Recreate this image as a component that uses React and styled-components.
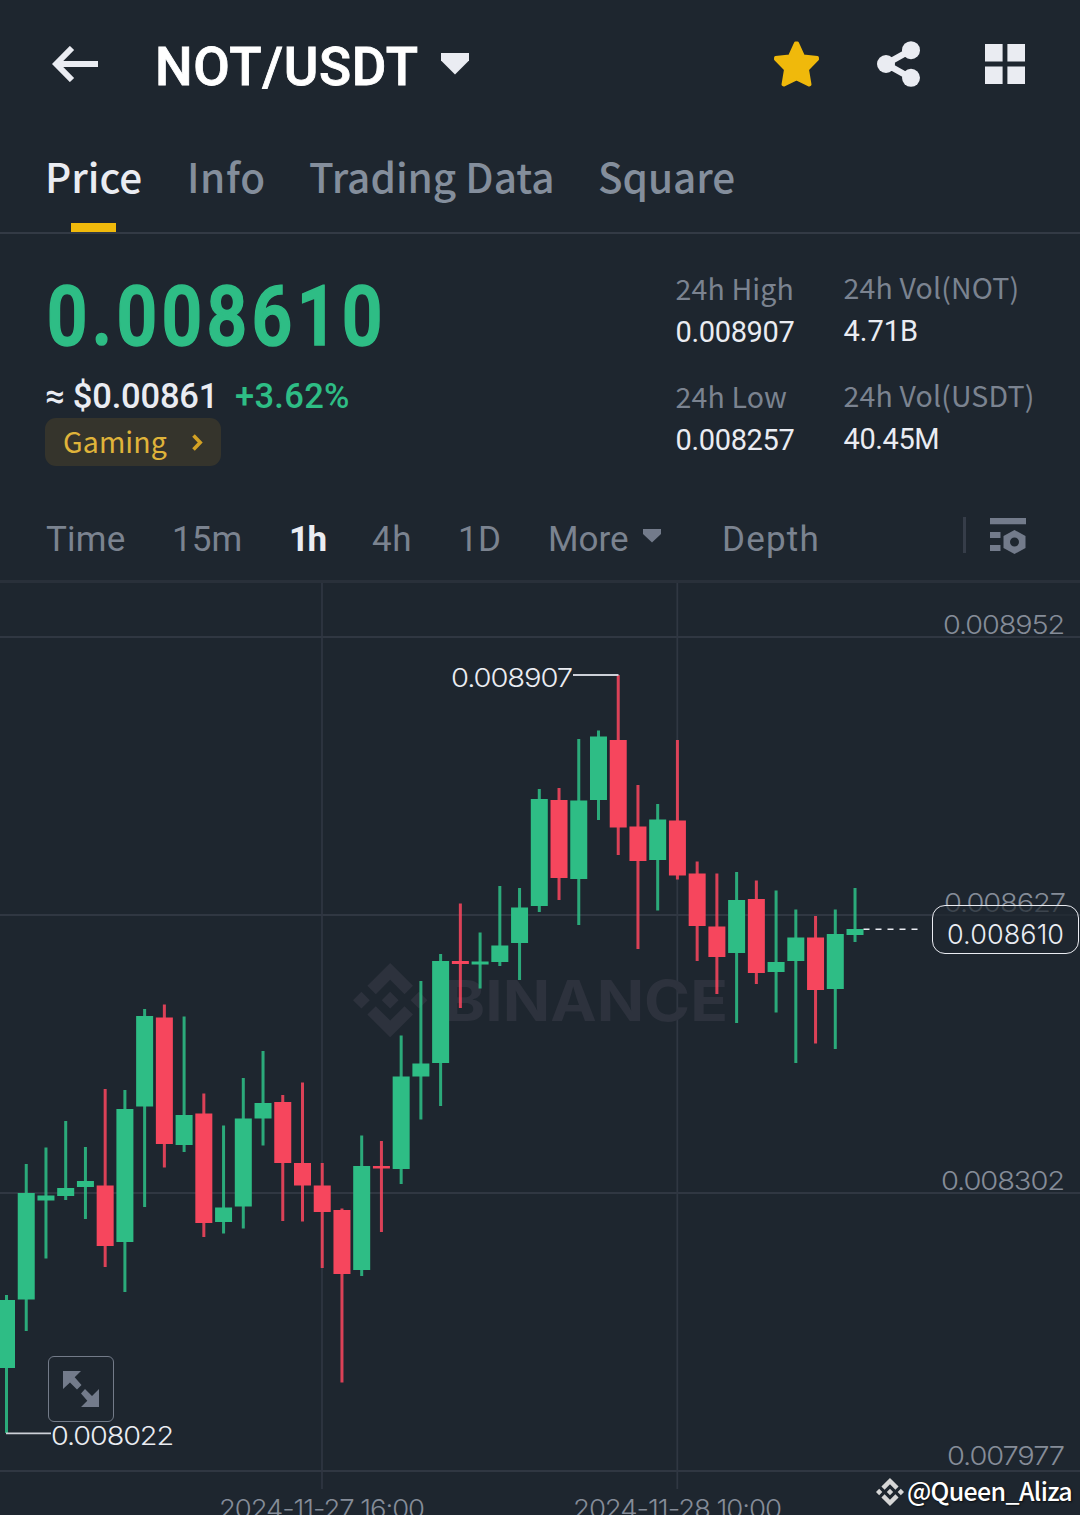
import React from 'react';
import styled, { createGlobalStyle } from 'styled-components';

const color = {
  background: '#1e262f',
  white: '#eaecf2',
  grey: '#848e9c',
  greyDark: '#7b8390',
  line: '#303742',
  green: '#2ebd85',
  red: '#f6465d',
  brand: '#f0b90b',
  watermark: '#2d323d',
};

const font = {
  label: '"Noto Sans CJK SC", "Noto Sans", sans-serif',
  number: 'Roboto, "Liberation Sans", sans-serif',
  chart: 'Inter, "Liberation Sans", sans-serif',
};

const GlobalStyle = createGlobalStyle`
  * {
    box-sizing: border-box;
  }

  body {
    margin: 0;
    background: ${color.background};
    font-family: ${font.label};
    overflow: hidden;
  }
`;

const Screen = styled.main`
  display: flex;
  flex-direction: column;
  width: 1080px;
  height: 1515px;
  overflow: hidden;
  color: ${color.white};
  background: ${color.background};
`;

const Header = styled.header`
  display: flex;
  align-items: center;
  height: 128px;
  padding: 0 55px 0 52px;
`;

const Pair = styled.h1`
  width: 286px;
  margin: 5px 0 0 57px;
  color: #fff;
  font: 500 53px/60px ${font.number};
  -webkit-text-stroke: .8px #fff;
  letter-spacing: ${({ $spacing }) => $spacing}px;
  white-space: nowrap;
`;

const Actions = styled.div`
  display: flex;
  align-items: center;
  margin-left: auto;
`;

const Action = styled.svg`
  display: block;
  margin-left: ${({ $gap }) => $gap || 0}px;
`;

const Tabs = styled.nav`
  display: flex;
  height: 106px;
  padding-left: 45px;
  border-bottom: 2px solid #333a45;
`;

const Tab = styled.a`
  display: flex;
  flex-direction: column;
  justify-content: space-between;
  width: ${({ $width }) => $width}px;
  padding-top: 18px;
  color: ${({ $active }) => ($active ? color.white : color.grey)};
  font-size: 40.5px;
  font-weight: 500;
  line-height: 60px;
  letter-spacing: ${({ $spacing }) => $spacing}px;
  white-space: nowrap;
`;

const TabMarker = styled.span`
  width: 45px;
  height: 9px;
  margin-left: 26px;
  background: ${color.brand};
`;

const Summary = styled.section`
  display: flex;
  height: 264px;
`;

const Quote = styled.div`
  flex: none;
  width: 675px;
  padding: 34px 0 0 45px;
`;

const LastPrice = styled.div`
  height: 98px;
  padding-left: 2px;
  color: ${color.green};
  font: 600 83px/98px ${font.number};
  -webkit-text-stroke: 1.6px ${color.green};
  letter-spacing: 5px;
  white-space: nowrap;
  transform: scaleX(.86);
  transform-origin: left;
`;

const Converted = styled.div`
  display: flex;
  height: 52px;
  padding-top: 10px;
  font: 500 34.5px/40px ${font.number};
  white-space: nowrap;
`;

const Fiat = styled.span`
  width: 190px;
  letter-spacing: -.2px;
`;

const Change = styled.span`
  color: ${color.green};
  letter-spacing: .3px;
`;

const Category = styled.a`
  display: flex;
  align-items: center;
  justify-content: space-between;
  width: 176px;
  height: 48px;
  padding: 0 18px;
  color: #e0b43a;
  font-size: 28.5px;
  line-height: 46px;
  letter-spacing: .1px;
  background: #35342c;
  border-radius: 11px;

  span {
    height: 48px;
  }
`;

const Stats = styled.dl`
  display: grid;
  grid-template-columns: 168px auto;
  grid-auto-rows: 108px;
  margin: 0;
  padding-top: 33px;
`;

const Stat = styled.div`
  margin-top: ${({ $raised }) => ($raised ? -1 : 0)}px;
  padding-left: .5px;
  white-space: nowrap;
`;

const StatName = styled.dt`
  color: ${color.greyDark};
  font-size: 28.5px;
  line-height: 42px;
  letter-spacing: .15px;
`;

const StatValue = styled.dd`
  margin: 2px 0 0;
  font: 400 29px/42px ${font.number};
  letter-spacing: ${({ $spacing }) => $spacing}px;
`;

const Intervals = styled.nav`
  display: flex;
  align-items: center;
  height: 85px;
  padding: 2px 54px 0 46px;
  border-bottom: 3px solid #29303a;
`;

const Interval = styled.a`
  display: flex;
  align-items: center;
  width: ${({ $width }) => $width}px;
  color: ${({ $active }) => ($active ? color.white : color.greyDark)};
  font: ${({ $active }) => ($active ? 700 : 400)} 35px/42px ${font.number};
  letter-spacing: ${({ $spacing }) => $spacing || 0}px;
`;

const Divider = styled.span`
  width: 3px;
  height: 36px;
  margin: -10px 24px 0 auto;
  background: #363d49;
`;

const Chart = styled.section`
  position: relative;
  flex: 1;
  min-height: 0;
`;

const Plot = styled.svg`
  display: block;
  font-family: ${font.chart};
`;

const PriceBadge = styled.div`
  position: absolute;
  top: 322px;
  right: 1px;
  width: 147px;
  height: 49px;
  padding-left: 14px;
  font: 300 27px/57px ${font.chart};
  letter-spacing: .1px;
  background: rgba(30, 38, 47, .7);
  border: 1.5px solid ${color.white};
  border-radius: 13px;
`;

const Expand = styled.button`
  position: absolute;
  top: 773px;
  left: 48px;
  display: flex;
  align-items: center;
  justify-content: center;
  width: 66px;
  height: 66px;
  padding: 0;
  background: none;
  border: 1.5px solid #737b89;
  border-radius: 6px;
`;

const Credit = styled.div`
  position: absolute;
  right: 8px;
  bottom: 6px;
  display: flex;
  align-items: center;
  gap: 3px;
  color: #fff;
  font-size: 25px;
  font-weight: 500;
  line-height: 38px;
  letter-spacing: -.65px;
  text-shadow: 1px 1px 2px rgba(0, 0, 0, .7);

  span {
    margin-top: -3px;
  }
`;

const logoPath = 'M16.624 13.92l2.718 2.716-7.353 7.353-7.353-7.352 2.717-2.717 4.636 4.66zM21.26 9.284L24 12l-2.715 2.716L18.568 12zM11.988 9.285l2.717 2.691-2.717 2.718L9.272 12zM2.716 9.284L5.409 12l-2.692 2.692L0 12zM11.989.012l7.353 7.329-2.718 2.715-4.635-4.636-4.636 4.66-2.717-2.716z';

const tabs = [
  { name: 'Price', width: 142, spacing: 0, active: true },
  { name: 'Info', width: 122, spacing: 0.6 },
  { name: 'Trading Data', width: 289, spacing: 0 },
  { name: 'Square', width: 140, spacing: -0.1 },
];

const stats = [
  { name: '24h High', value: '0.008907', spacing: -0.35 },
  { name: '24h Vol(NOT)', value: '4.71B', spacing: 0, raised: true },
  { name: '24h Low', value: '0.008257', spacing: -0.35 },
  { name: '24h Vol(USDT)', value: '40.45M', spacing: -0.4, raised: true },
];

const intervals = [
  { name: 'Time', width: 126, spacing: 0.2 },
  { name: '15m', width: 117, spacing: 0.1 },
  { name: '1h', width: 83, spacing: -1.6, active: true },
  { name: '4h', width: 86, spacing: 0.6 },
  { name: '1D', width: 90, spacing: 0.4 },
  { name: 'More', width: 174, spacing: 0, menu: true },
  { name: 'Depth', width: 110, spacing: 1.2 },
];

// [high, body top, body bottom, low, rising]
const candles = [
  [1295, 1300, 1368, 1433, 1],
  [1164, 1193, 1299.5, 1331, 1],
  [1147.5, 1195.5, 1200.5, 1258.5, 1],
  [1121, 1188, 1196, 1200, 1],
  [1147, 1181, 1187, 1219, 1],
  [1089, 1185.5, 1246, 1267, 0],
  [1090, 1109, 1242, 1292, 1],
  [1009, 1016, 1106.5, 1207, 1],
  [1004.5, 1017.5, 1144, 1167.5, 0],
  [1016.5, 1115, 1145, 1152, 1],
  [1093.5, 1113.5, 1223, 1237, 0],
  [1125.5, 1207.5, 1222, 1233.5, 1],
  [1078, 1118.5, 1206.5, 1228.5, 1],
  [1051, 1103, 1118.5, 1145.5, 1],
  [1095, 1102, 1163, 1221, 0],
  [1082.5, 1163, 1185.5, 1221.5, 0],
  [1163, 1185.5, 1212, 1268, 0],
  [1208.5, 1210, 1274, 1382.5, 0],
  [1135.5, 1166, 1270, 1276, 1],
  [1141, 1166, 1168.5, 1232, 0],
  [1035.5, 1076.5, 1169, 1184, 1],
  [981, 1063.5, 1076.5, 1119.5, 1],
  [954, 961, 1063, 1106, 1],
  [903.5, 961, 964, 1008, 0],
  [932.5, 961.5, 964.5, 988.5, 1],
  [886, 945.5, 962, 966, 1],
  [888, 907.5, 943, 980, 1],
  [789, 799, 906, 912, 1],
  [788, 800, 878, 900, 0],
  [739, 800.5, 879, 925, 1],
  [730.5, 736.5, 800, 820, 1],
  [675, 740, 827.5, 855, 0],
  [785, 826.5, 861, 949, 0],
  [804, 819.5, 860, 910.5, 1],
  [740, 820.5, 875.5, 879.5, 0],
  [861.5, 873.5, 926, 961, 0],
  [873.5, 926.5, 957, 994, 0],
  [872, 900, 953, 1023, 1],
  [880.5, 899, 973, 984, 0],
  [890.5, 962, 972, 1012.5, 1],
  [909.5, 937.5, 961, 1063, 1],
  [916, 937.5, 990, 1043.5, 0],
  [909.5, 934, 989, 1049, 1],
  [888, 929, 935, 942, 1],
];

const candleX = (index) => 6.5 + index * 19.733;

const axis = [
  { text: '0.008952', x: 943, y: 634, length: 121 },
  { text: '0.008627', x: 944, y: 912, length: 121 },
  { text: '0.008302', x: 941, y: 1190, length: 123 },
  { text: '0.007977', x: 947, y: 1465, length: 117 },
  { text: '2024-11-27 16:00', x: 219, y: 1518, length: 205 },
  { text: '2024-11-28 10:00', x: 573, y: 1518, length: 208 },
];

const Candle = ({ index, data }) => {
  const [high, top, bottom, low, rising] = data;
  const x = candleX(index);

  return (
    <g fill={rising ? color.green : color.red}>
      <rect x={x - 1.5} y={high} width="3" height={low - high} opacity=".88" />
      <rect x={x - 8.5} y={top} width="17" height={bottom - top} />
    </g>
  );
};

const CandleChart = () => (
  <Plot width="1080" height="932" viewBox="0 583 1080 932">
    <g stroke={color.line} strokeWidth="2">
      {[637, 915, 1193, 1471].map((y) => <path key={y} d={`M0 ${y}H1080`} />)}
      {[322, 677.3].map((x) => <path key={x} d={`M${x} 583V1489`} strokeWidth="1.7" />)}
    </g>
    <g fill={color.watermark}>
      <path d={logoPath} transform="translate(353 963) scale(3.1)" />
      <text x="444" y="1020.5" fontSize="56.5" fontWeight="700" textLength="284" lengthAdjust="spacingAndGlyphs">BINANCE</text>
    </g>
    {candles.map((data, index) => <Candle key={candleX(index)} index={index} data={data} />)}
    <g fontSize="26" fontWeight="300" letterSpacing="-1" fill="#858c98">
      {axis.map(({ text, x, y, length }) => (
        <text key={text} x={x} y={y} textLength={length} lengthAdjust="spacingAndGlyphs">{text}</text>
      ))}
    </g>
    <g fontSize="26" fontWeight="300" letterSpacing="-1" fill={color.white}>
      <text x="451" y="687" textLength="121" lengthAdjust="spacingAndGlyphs">0.008907</text>
      <text x="51" y="1445" textLength="122" lengthAdjust="spacingAndGlyphs">0.008022</text>
    </g>
    <g stroke="#cdd0d8" strokeWidth="1.8" fill="none">
      <path d="M573 675H618.5" />
      <path d="M6 1433.3H51" />
      <path d="M863.5 929.3H918" strokeDasharray="6 6" stroke={color.white} strokeWidth="1.5" />
    </g>
  </Plot>
);

export default () => (
  <Screen>
    <GlobalStyle />
    <Header>
      <Action width="46" height="36" viewBox="0 0 46 36" fill="none" stroke={color.white} strokeWidth="6">
        <path d="M20 2L4.2 18L20 34M5 18H46" />
      </Action>
      <Pair $spacing={0.7}>NOT/USDT</Pair>
      <Action width="28" height="22" viewBox="0 0 28 22" fill={color.white}>
        <path d="M0 0H28V7.5L14 21.5L0 7.5Z" />
      </Action>
      <Actions>
        <Action width="45" height="46" viewBox="0 0 45 46" fill={color.brand} stroke={color.brand} strokeWidth="3" strokeLinejoin="round">
          <path d="M21.5 2H23.5L29.3 14.9L43.4 16.6L43.5 18.2L33.5 28.5L36 43.5L34.8 44L22.5 37.8L10.2 44L9 43.5L11.5 28.5L1.5 18.2L1.6 16.6L15.7 14.9Z" />
        </Action>
        <Action $gap={58} width="43" height="46" viewBox="0 0 43 46" fill={color.white}>
          <path d="M34 9L9 23L34 37" fill="none" stroke={color.white} strokeWidth="6.5" />
          <circle cx="9" cy="23" r="9" />
          <circle cx="34" cy="9.2" r="9" />
          <circle cx="34" cy="36.8" r="9" />
        </Action>
        <Action $gap={65} width="40" height="40" viewBox="0 0 40 40" fill={color.white}>
          <path d="M0 0H17.6V17.6H0ZM22.4 0H40V17.6H22.4ZM0 22.4H17.6V40H0ZM22.4 22.4H40V40H22.4Z" />
        </Action>
      </Actions>
    </Header>

    <Tabs>
      {tabs.map(({ name, width, spacing, active }) => (
        <Tab key={name} $width={width} $spacing={spacing} $active={active}>
          {name}
          {active && <TabMarker />}
        </Tab>
      ))}
    </Tabs>

    <Summary>
      <Quote>
        <LastPrice>0.008610</LastPrice>
        <Converted>
          <Fiat>≈ $0.00861</Fiat>
          <Change>+3.62%</Change>
        </Converted>
        <Category>
          <span>Gaming</span>
          <svg width="11" height="17" viewBox="0 0 11 17" fill="none" stroke="#d3a124" strokeWidth="3.6">
            <path d="M1.5 1.5L8.2 8.5L1.5 15.5" />
          </svg>
        </Category>
      </Quote>
      <Stats>
        {stats.map(({ name, value, spacing, raised }) => (
          <Stat key={name} $raised={raised}>
            <StatName>{name}</StatName>
            <StatValue $spacing={spacing}>{value}</StatValue>
          </Stat>
        ))}
      </Stats>
    </Summary>

    <Intervals>
      {intervals.map(({ name, width, spacing, active, menu }) => (
        <Interval key={name} $width={width} $spacing={spacing} $active={active}>
          {name}
          {menu && (
            <Action $gap={14} width="18" height="22" viewBox="0 0 18 22" fill="#737b8b">
              <path d="M0 0H18V5L9 13.5L0 5Z" />
            </Action>
          )}
        </Interval>
      ))}
      <Divider />
      <Action width="36" height="44" viewBox="0 0 36 44" fill="#737b8b">
        <path d="M0 0H36V6.3H0ZM0 14H10.5V20H0ZM0 27H10.5V33H0Z" />
        <path fillRule="evenodd" d="M24.5 12L35.5 18V30L24.5 36L13.5 30V18ZM24.5 19.5A4.5 4.5 0 1 0 24.5 28.5A4.5 4.5 0 1 0 24.5 19.5Z" />
      </Action>
    </Intervals>

    <Chart>
      <CandleChart />
      <PriceBadge>0.008610</PriceBadge>
      <Expand aria-label="Expand">
        <svg width="36" height="36" viewBox="0 0 36 36" fill="#737b8b">
          <path d="M0 0H18L11.7 6.3L18.5 14L14 18.5L7 11.5L0 18Z" />
          <path d="M36 36H18L24.3 29.7L18 22.5L22 18L29 25L36 18Z" />
        </svg>
      </Expand>
      <Credit>
        <svg width="28" height="28" viewBox="0 0 24 24" fill="#d6d6d6">
          <path d={logoPath} />
        </svg>
        <span>@Queen_Aliza</span>
      </Credit>
    </Chart>
  </Screen>
);
